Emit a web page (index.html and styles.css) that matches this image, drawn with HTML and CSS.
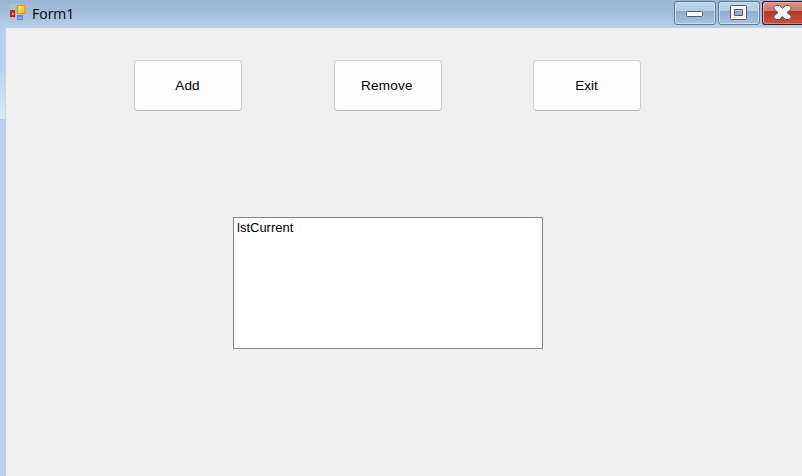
FILE: index.html
```html
<!DOCTYPE html>
<html lang="en">
<head>
<meta charset="utf-8">
<title>Form1</title>
<link rel="stylesheet" href="styles.css">
</head>
<body>
<div class="window">
  <header class="titlebar">
    <svg class="app-icon" width="18" height="18" viewBox="0 0 18 18">
      <defs>
        <linearGradient id="gold" x1="0" y1="0" x2="1" y2="1"><stop offset="0" stop-color="#ffe98a"/><stop offset="1" stop-color="#f2b400"/></linearGradient>
        <linearGradient id="blue" x1="0" y1="0" x2="0" y2="1"><stop offset="0" stop-color="#3e7cdc"/><stop offset="1" stop-color="#9bc8ff"/></linearGradient>
      </defs>
      <rect width="18" height="18" fill="#b9c0c8" opacity=".65"/>
      <rect x="1.5" y="6.5" width="4" height="6" fill="#d92a16" stroke="#b3241a"/>
      <rect x="3" y="9" width="1.500" height="2" fill="#ffb49c"/>
      <rect x="8.5" y="1.500" width="7.500" height="8" fill="url(#gold)" stroke="#cf9820"/>
      <rect x="8.500" y="11.500" width="5" height="4" fill="url(#blue)" stroke="#5b8dd6"/>
    </svg>
    <span class="caption">Form1</span>
    <div class="controls">
      <div class="control"><svg width="42" height="22" viewBox="0 0 42 22"><rect x="11.500" y="9.500" width="16" height="5" rx="1" fill="#fafafa" stroke="#535a6c"/></svg></div>
      <div class="control"><svg width="42" height="22" viewBox="0 0 42 22"><path fill="#f4f4f4" fill-rule="evenodd" stroke="#535a6c" d="M12.500 3.500h14q1 0 1 1v12q0 1-1 1h-14q-1 0-1-1v-12q0-1 1-1zM15.500 7.500v6h8v-6z"/></svg></div>
      <div class="control close"><svg width="42" height="22" viewBox="0 0 42 22"><path fill="#f4f4f4" stroke="#535a6c" stroke-linejoin="round" d="M13 3.500h3.500l3 3 3-3H26l2 2v1.500l-4 3.500 4 3.500v1.500l-2 2h-3.500l-3-3-3 3H13l-2-2V14l4-3.500L11 7V5.500z"/></svg></div>
    </div>
  </header>
  <div class="body">
    <div class="edge"></div>
    <main class="client">
      <div class="buttons">
        <button class="button add">Add</button>
        <button class="button remove">Remove</button>
        <button class="button exit">Exit</button>
      </div>
      <div class="listbox">lstCurrent</div>
    </main>
  </div>
</div>
</body>
</html>
```
FILE: styles.css
```css
* { box-sizing: border-box; }
body { margin: 0; overflow: hidden; }
.window {
  width: 802px;
  height: 476px;
  display: flex;
  flex-direction: column;
  background: #b9d1ea;
  color: #000;
}
.titlebar {
  flex: none;
  height: 28px;
  display: flex;
  align-items: flex-start;
  padding-left: 9px;
  background: linear-gradient(#9ab6d3, #a3bddb 45%, #b8d0ea);
}
.app-icon { margin-top: 4px; }
.caption {
  margin-left: 5px;
  font: 14px/28px "Open Sans", "Noto Sans", sans-serif;
}
.controls {
  margin-left: auto;
  padding-top: 1px;
  display: flex;
  gap: 2px;
}
.control {
  width: 42px;
  height: 24px;
  border: 1px solid #607993;
  border-radius: 3px;
  box-shadow: inset 0 0 0 1px #cbdced;
  background: linear-gradient(#bed3e8, #b3cce4 42%, #92adc9 43%, #a7c3df);
}
.control svg { display: block; }
.close {
  width: 40px;
  border: 1px solid #471522;
  border-right: 0;
  border-radius: 3px 0 0 3px;
  box-shadow: inset 1px 1px 0 #e5aaa2, inset 0 -1px 0 #d98170;
  background: linear-gradient(#d9958a, #cd7767 42%, #b23824 43%, #c65340);
}
.body { flex: 1; display: flex; }
.edge {
  width: 6px;
  height: 91px;
  border-right: 1px solid #c3d9ef;
  background: linear-gradient(#b7cfe9, #b9d1ea 45%, #dce9f7);
}
.client {
  flex: 1;
  padding-top: 32px;
  background: #f0f0f0;
  font: 13px/15px "Liberation Sans", Arial, sans-serif;
}
.buttons { display: flex; padding-left: 128px; }
.button {
  width: 108px;
  height: 51px;
  padding: 0 1px 0 0;
  border: 1px solid #d0d0d0;
  border-bottom-color: #b8b8b8;
  border-radius: 4px;
  background: #fdfdfd;
  color: #000;
  font: inherit;
  font-size: 13.5px;
}
.add { letter-spacing: .2px; }
.remove { margin-left: 92px; letter-spacing: .25px; padding-right: 2px; }
.exit { margin-left: 91px; }
.listbox {
  width: 310px;
  height: 132px;
  margin: 106px 0 0 227px;
  padding: 2px 3px;
  border: 1px solid #828790;
  background: #fff;
}
```
